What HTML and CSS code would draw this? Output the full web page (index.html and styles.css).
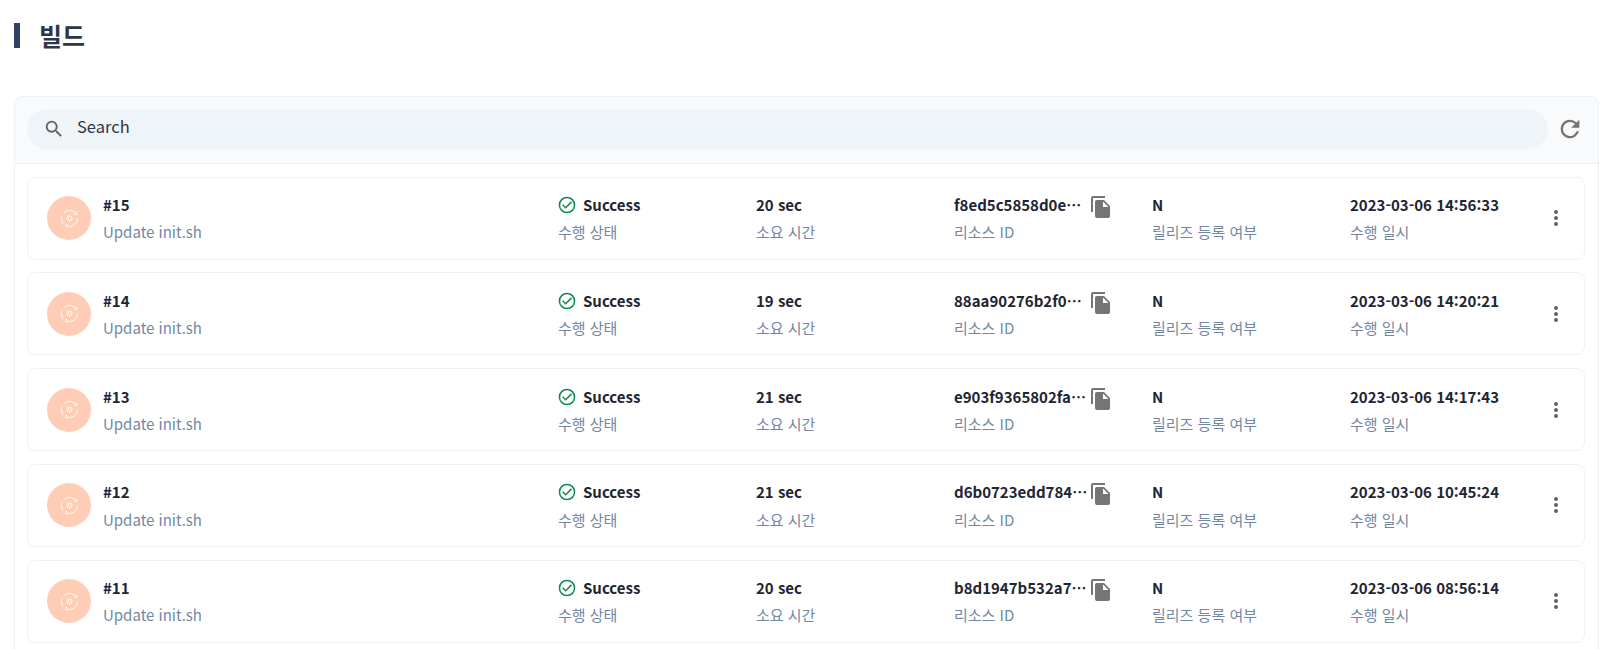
FILE: index.html
```html
<!DOCTYPE html>
<html lang="ko">
<head>
<meta charset="utf-8">
<title>빌드</title>
<link rel="stylesheet" href="styles.css">
</head>
<body>
<svg class="defs" width="0" height="0" aria-hidden="true">
  <symbol id="build" viewBox="0 0 24 24">
    <g fill="none" stroke="#fff" stroke-width="1">
      <path d="M5.500 5.600A9.200 9.200 0 0 1 19.600 6.800"/><path d="M21.200 12a9.200 9.200 0 0 1-3 6.800"/><path d="M17.600 19.300A9.200 9.200 0 0 1 8.600 20.500"/><path d="M4.600 17.400A9.200 9.200 0 0 1 2.800 12a9.200 9.200 0 0 1 .7-3.500"/>
      <path d="M20.200 4.200v3h-3M9.400 22.300l-2.400-2.200 2.400-2"/>
      <circle cx="12" cy="12" r="2"/>
      <path d="M12 8v2M12 14v2M8 12h2M14 12h2M9.200 9.200l1.400 1.400M13.400 13.400l1.400 1.400M14.800 9.200l-1.400 1.400M10.600 13.400l-1.400 1.400"/>
    </g>
  </symbol>
  <symbol id="ok" viewBox="0 0 24 24">
    <path fill="#0f8a4f" d="M12 2a10 10 0 1 0 0 20 10 10 0 0 0 0-20zm0 18.2a8.2 8.2 0 1 1 0-16.4 8.2 8.2 0 0 1 0 16.4zm4.7-12.6L10.4 14l-3-3-1.3 1.300 4.300 4.300 7.600-7.700z"/>
  </symbol>
  <symbol id="copy" viewBox="0 0 24 24">
    <path fill="#757575" d="M16 1H4a2 2 0 0 0-2 2v14h2V3h12V1zm-1 4 6 6v10a2 2 0 0 1-2 2H8a2 2 0 0 1-2-2V7a2 2 0 0 1 2-2h7zm-1 7h5.500L14 6.500V12z"/>
  </symbol>
  <symbol id="more" viewBox="0 0 24 24">
    <path fill="#616161" d="M12 8a2 2 0 1 0 0-4 2 2 0 0 0 0 4zm0 2a2 2 0 1 0 0 4 2 2 0 0 0 0-4zm0 6a2 2 0 1 0 0 4 2 2 0 0 0 0-4z"/>
  </symbol>
</svg>

<header class="page-title"><span class="title-bar"></span><h1>빌드</h1></header>

<main class="panel">
  <div class="toolbar">
    <div class="search">
      <svg class="search-icon" viewBox="0 0 24 24"><path fill="#616161" d="M15.500 14h-.79l-.28-.27A6.470 6.470 0 0 0 16 9.500 6.500 6.500 0 1 0 9.500 16c1.610 0 3.090-.59 4.230-1.570l.27.28v.79l5 4.990L20.490 19l-4.990-5zm-6 0C7.010 14 5 11.990 5 9.500S7.010 5 9.500 5 14 7.010 14 9.500 11.990 14 9.500 14z"/></svg>
      <span class="search-text">Search</span>
    </div>
    <svg class="refresh" viewBox="0 0 24 24"><path fill="#757575" d="M17.650 6.350A7.960 7.960 0 0 0 12 4a8 8 0 1 0 7.730 10h-2.080A6 6 0 1 1 12 6c1.660 0 3.140.69 4.220 1.780L13 11h7V4l-2.350 2.350z"/></svg>
  </div>
  <div class="list">
    <article class="card">
      <div class="avatar"><svg class="avatar-icon"><use href="#build"/></svg></div>
      <div class="col col-name"><div class="main">#15</div><div class="sub">Update init.sh</div></div>
      <div class="col"><div class="main status"><svg class="ok"><use href="#ok"/></svg>Success</div><div class="sub">수행 상태</div></div>
      <div class="col"><div class="main">20 sec</div><div class="sub">소요 시간</div></div>
      <div class="col col-id"><div class="id-row"><div class="main ellipsis">f8ed5c5858d0e4a1b7c2</div><svg class="copy"><use href="#copy"/></svg></div><div class="sub">리소스 ID</div></div>
      <div class="col"><div class="main">N</div><div class="sub">릴리즈 등록 여부</div></div>
      <div class="col col-date"><div class="main">2023-03-06 14:56:33</div><div class="sub">수행 일시</div></div>
      <svg class="more"><use href="#more"/></svg>
    </article>
    <article class="card">
      <div class="avatar"><svg class="avatar-icon"><use href="#build"/></svg></div>
      <div class="col col-name"><div class="main">#14</div><div class="sub">Update init.sh</div></div>
      <div class="col"><div class="main status"><svg class="ok"><use href="#ok"/></svg>Success</div><div class="sub">수행 상태</div></div>
      <div class="col"><div class="main">19 sec</div><div class="sub">소요 시간</div></div>
      <div class="col col-id"><div class="id-row"><div class="main ellipsis">88aa90276b2f0c3d9e1a</div><svg class="copy"><use href="#copy"/></svg></div><div class="sub">리소스 ID</div></div>
      <div class="col"><div class="main">N</div><div class="sub">릴리즈 등록 여부</div></div>
      <div class="col col-date"><div class="main">2023-03-06 14:20:21</div><div class="sub">수행 일시</div></div>
      <svg class="more"><use href="#more"/></svg>
    </article>
    <article class="card">
      <div class="avatar"><svg class="avatar-icon"><use href="#build"/></svg></div>
      <div class="col col-name"><div class="main">#13</div><div class="sub">Update init.sh</div></div>
      <div class="col"><div class="main status"><svg class="ok"><use href="#ok"/></svg>Success</div><div class="sub">수행 상태</div></div>
      <div class="col"><div class="main">21 sec</div><div class="sub">소요 시간</div></div>
      <div class="col col-id"><div class="id-row"><div class="main ellipsis">e903f9365802fa7b1c4d</div><svg class="copy"><use href="#copy"/></svg></div><div class="sub">리소스 ID</div></div>
      <div class="col"><div class="main">N</div><div class="sub">릴리즈 등록 여부</div></div>
      <div class="col col-date"><div class="main">2023-03-06 14:17:43</div><div class="sub">수행 일시</div></div>
      <svg class="more"><use href="#more"/></svg>
    </article>
    <article class="card">
      <div class="avatar"><svg class="avatar-icon"><use href="#build"/></svg></div>
      <div class="col col-name"><div class="main">#12</div><div class="sub">Update init.sh</div></div>
      <div class="col"><div class="main status"><svg class="ok"><use href="#ok"/></svg>Success</div><div class="sub">수행 상태</div></div>
      <div class="col"><div class="main">21 sec</div><div class="sub">소요 시간</div></div>
      <div class="col col-id"><div class="id-row"><div class="main ellipsis">d6b0723edd7842c5f9a0</div><svg class="copy"><use href="#copy"/></svg></div><div class="sub">리소스 ID</div></div>
      <div class="col"><div class="main">N</div><div class="sub">릴리즈 등록 여부</div></div>
      <div class="col col-date"><div class="main">2023-03-06 10:45:24</div><div class="sub">수행 일시</div></div>
      <svg class="more"><use href="#more"/></svg>
    </article>
    <article class="card">
      <div class="avatar"><svg class="avatar-icon"><use href="#build"/></svg></div>
      <div class="col col-name"><div class="main">#11</div><div class="sub">Update init.sh</div></div>
      <div class="col"><div class="main status"><svg class="ok"><use href="#ok"/></svg>Success</div><div class="sub">수행 상태</div></div>
      <div class="col"><div class="main">20 sec</div><div class="sub">소요 시간</div></div>
      <div class="col col-id"><div class="id-row"><div class="main ellipsis">b8d1947b532a7e60c1f3</div><svg class="copy"><use href="#copy"/></svg></div><div class="sub">리소스 ID</div></div>
      <div class="col"><div class="main">N</div><div class="sub">릴리즈 등록 여부</div></div>
      <div class="col col-date"><div class="main">2023-03-06 08:56:14</div><div class="sub">수행 일시</div></div>
      <svg class="more"><use href="#more"/></svg>
    </article>
  </div>
</main>
</body>
</html>
```
FILE: styles.css
```css
* { box-sizing: border-box; }
html, body { height: 100%; }
body {
  margin: 0;
  padding: 23px 24px 0 14px;
  overflow: hidden;
  background: #fff;
  font-family: "Noto Sans CJK KR", "Noto Sans", sans-serif;
  color: #1a202c;
}
.defs { position: absolute; }
.page-title { display: flex; align-items: center; height: 25px; margin-bottom: 48px; }
.title-bar { width: 6px; height: 25px; background: #334260; margin-right: 19px; }
h1 { margin: 0; font-size: 25px; line-height: 25px; font-weight: 700; color: #2d3748; }
.panel {
  border: 1px solid #edf2f7;
  border-bottom: 0;
  border-radius: 8px 8px 0 0;
  height: 560px;
}
.toolbar {
  display: flex;
  align-items: flex-start;
  height: 67px;
  padding: 12px 14px 0 12px;
  background: #f9fafc;
  border-bottom: 1px solid #edf2f7;
  border-radius: 8px 8px 0 0;
}
.search {
  flex: 1;
  display: flex;
  align-items: center;
  height: 40px;
  padding-left: 16px;
  background: #eff4f8;
  border-radius: 20px;
}
.search-icon { width: 22px; height: 22px; margin-right: 12px; }
.search-text { font-size: 16.5px; line-height: 34px; height: 40px; color: #2d3748; }
.refresh { width: 28px; height: 28px; margin: 6px 0 0 8px; }
.list { display: flex; flex-direction: column; gap: 12.75px; padding: 12.7px 13px 0 12px; }
.card {
  display: flex;
  align-items: center;
  height: 83px;
  padding: 0 9px 0 19px;
  background: #fff;
  border: 1px solid #edf2f7;
  border-radius: 8px;
}
.avatar {
  flex: none;
  display: flex;
  align-items: center;
  justify-content: center;
  width: 44px;
  height: 44px;
  margin-right: 12px;
  border-radius: 50%;
  background: #ffcdb6;
}
.avatar-icon { width: 21px; height: 21px; }
.col { flex: none; width: 198px; padding-top: 1.1px; }
.col-name { width: 455px; }
.col-date { width: 194px; }
.main { font-size: 15px; line-height: 22px; font-weight: 700; color: #1e2533; white-space: nowrap; }
.sub { font-size: 15px; line-height: 22px; margin-top: 5.1px; color: #7287a3; white-space: nowrap; }
.status { display: flex; align-items: center; }
.ok { width: 20px; height: 20px; margin: 0 6px 0 -1px; }
.id-row { display: flex; align-items: center; }
.ellipsis { width: 134px; overflow: hidden; text-overflow: ellipsis; }
.copy { width: 24px; height: 24px; margin: 1px 0 -3px 1px; }
.more { width: 24px; height: 24px; flex: none; }
```
